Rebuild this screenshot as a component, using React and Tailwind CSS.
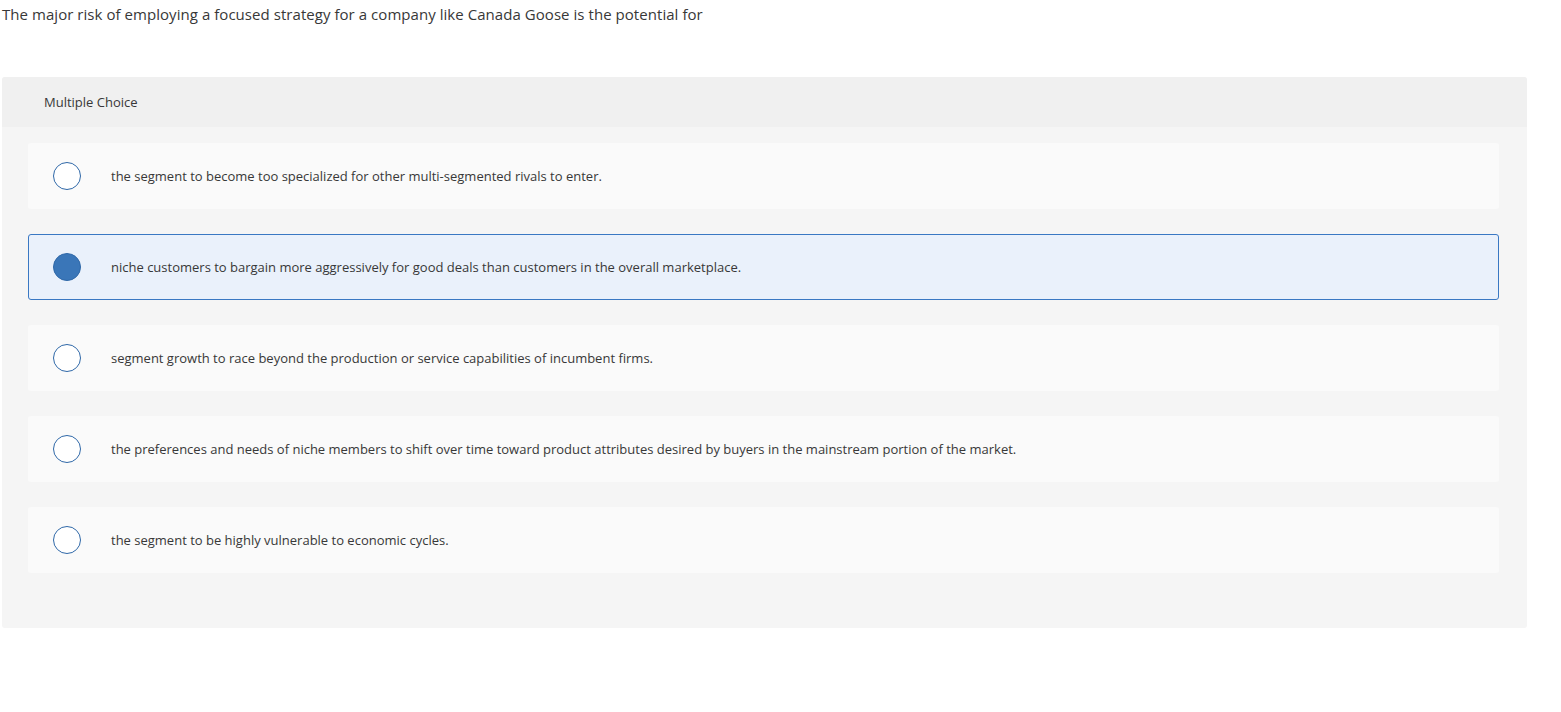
import React from "react";

const options = [
  "the segment to become too specialized for other multi-segmented rivals to enter.",
  "niche customers to bargain more aggressively for good deals than customers in the overall marketplace.",
  "segment growth to race beyond the production or service capabilities of incumbent firms.",
  "the preferences and needs of niche members to shift over time toward product attributes desired by buyers in the mainstream portion of the market.",
  "the segment to be highly vulnerable to economic cycles.",
];

const App = () => {
  const selected = 1;
  return (
    <div className="min-h-screen bg-white font-['Open_Sans','Liberation_Sans',sans-serif] text-[#383838]">
      <p className="pl-[2px] pt-[4px] text-[15px] leading-[20px] tracking-[0.05px]">
        The major risk of employing a focused strategy for a company like Canada Goose is the potential for
      </p>
      <div className="ml-[2px] mt-[53px] w-[1525px] overflow-hidden rounded-[3px] bg-[#f5f5f5]">
        <div className="flex h-[50px] items-center bg-[#f0f0f0] pl-[42px] pt-[1px] text-[13px]">Multiple Choice</div>
        <div className="flex flex-col gap-[25px] pb-[55px] pl-[26px] pt-[16px]">
          {options.map((text, i) => (
            <div
              key={i}
              className={`flex h-[66px] w-[1471px] items-center rounded-[3px] border ${
                i === selected ? "border-[#3a78c3] bg-[#eaf1fb]" : "border-transparent bg-[#fafafa]"
              }`}
            >
              <span
                className={`ml-[24px] size-[28px] shrink-0 rounded-full border-[1.5px] border-[#2f68a8] ${
                  i === selected ? "bg-[#3a76b8]" : "bg-white"
                }`}
              />
              <span className="ml-[30px] pt-[2px] text-[13px]">{text}</span>
            </div>
          ))}
        </div>
      </div>
    </div>
  );
};

export default App;
